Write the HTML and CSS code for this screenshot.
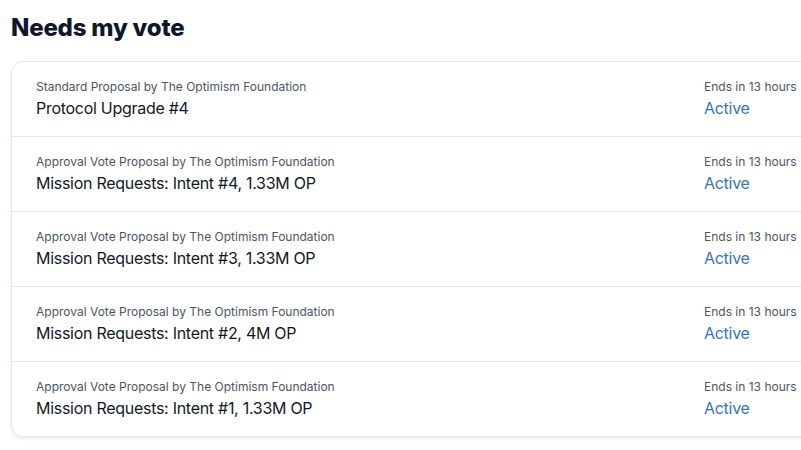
FILE: index.html
```html
<!DOCTYPE html>
<html>
<head>
<meta charset="utf-8">
<link rel="stylesheet" href="styles.css">
</head>
<body>
<div class="page">
  <h1 class="title">Needs my vote</h1>
  <div class="card">
    <div class="row">
      <div class="main">
        <div class="meta">Standard Proposal by The Optimism Foundation</div>
        <div class="name">Protocol Upgrade #4</div>
      </div>
      <div class="status">
        <div class="meta">Ends in 13 hours</div>
        <div class="active">Active</div>
      </div>
    </div>
    <div class="row">
      <div class="main">
        <div class="meta">Approval Vote Proposal by The Optimism Foundation</div>
        <div class="name">Mission Requests: Intent #4, 1.33M OP</div>
      </div>
      <div class="status">
        <div class="meta">Ends in 13 hours</div>
        <div class="active">Active</div>
      </div>
    </div>
    <div class="row">
      <div class="main">
        <div class="meta">Approval Vote Proposal by The Optimism Foundation</div>
        <div class="name">Mission Requests: Intent #3, 1.33M OP</div>
      </div>
      <div class="status">
        <div class="meta">Ends in 13 hours</div>
        <div class="active">Active</div>
      </div>
    </div>
    <div class="row">
      <div class="main">
        <div class="meta">Approval Vote Proposal by The Optimism Foundation</div>
        <div class="name">Mission Requests: Intent #2, 4M OP</div>
      </div>
      <div class="status">
        <div class="meta">Ends in 13 hours</div>
        <div class="active">Active</div>
      </div>
    </div>
    <div class="row">
      <div class="main">
        <div class="meta">Approval Vote Proposal by The Optimism Foundation</div>
        <div class="name">Mission Requests: Intent #1, 1.33M OP</div>
      </div>
      <div class="status">
        <div class="meta">Ends in 13 hours</div>
        <div class="active">Active</div>
      </div>
    </div>
  </div>
</div>
</body>
</html>
```

FILE: styles.css
```css
html, body {
  margin: 0;
  padding: 0;
  background: #ffffff;
}
body {
  font-family: Inter, "Noto Sans", sans-serif;
  color: #111827;
}
.page {
  width: 801px;
  height: 450px;
  overflow: hidden;
  padding: 12px 0 0 11px;
  box-sizing: border-box;
}
.title {
  margin: 0 0 17px 0;
  font-size: 24px;
  line-height: 32px;
  font-weight: 800;
  color: #0f172a;
  letter-spacing: -0.2px;
}
.card {
  width: 960px;
  border: 1px solid #e2e8f0;
  border-radius: 12px;
  box-shadow: 0 2px 3px rgba(15, 23, 42, 0.08);
  background: #fff;
}
.row {
  display: flex;
  padding: 17px 24px 16px;
  border-bottom: 1px solid #e2e8f0;
}
.row:last-child {
  border-bottom: none;
}
.main {
  width: 668px;
  flex: none;
}
.status {
  flex: 1;
}
.meta {
  font-size: 12px;
  line-height: 16px;
  color: #4b5563;
}
.name {
  margin-top: 1px;
  font-size: 16px;
  line-height: 24px;
  color: #111827;
  letter-spacing: -0.28px;
}
.active {
  margin-top: 1px;
  font-size: 16px;
  line-height: 24px;
  color: #3a72b8;
  letter-spacing: -0.28px;
}
```
